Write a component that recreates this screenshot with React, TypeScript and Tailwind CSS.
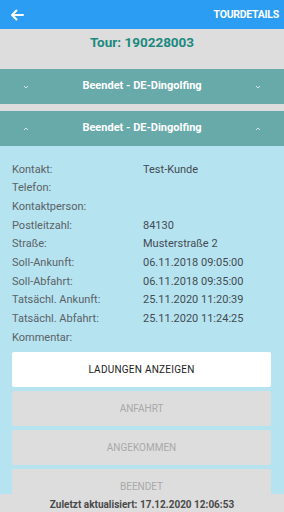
import React from 'react';

const rows: [string, string][] = [
  ['Kontakt:', 'Test-Kunde'],
  ['Telefon:', ''],
  ['Kontaktperson:', ''],
  ['Postleitzahl:', '84130'],
  ['Straße:', 'Musterstraße 2'],
  ['Soll-Ankunft:', '06.11.2018 09:05:00'],
  ['Soll-Abfahrt:', '06.11.2018 09:35:00'],
  ['Tatsächl. Ankunft:', '25.11.2020 11:20:39'],
  ['Tatsächl. Abfahrt:', '25.11.2020 11:24:25'],
  ['Kommentar:', ''],
];

const Chevron = ({ up }: { up?: boolean }) => (
  <svg width="6" height="4" viewBox="0 0 6 4" className="opacity-70">
    <path d={up ? 'M1 3 L3 1 L5 3' : 'M1 1 L3 3 L5 1'} stroke="white" strokeWidth="1" fill="none" />
  </svg>
);

const StopHeader = ({ title, open }: { title: string; open?: boolean }) => (
  <div className="h-[35px] shrink-0 bg-[#68a9a9] flex items-center justify-between px-[23px]">
    <Chevron up={open} />
    <span className="text-white font-bold text-[11px]">{title}</span>
    <Chevron up={open} />
  </div>
);

export default function App() {
  return (
    <div className="h-[512px] w-[284px] flex flex-col bg-[#dddddd] overflow-hidden" style={{ fontFamily: 'Roboto, sans-serif' }}>
      <div className="h-[29px] shrink-0 bg-[#2b9ef3] flex items-center justify-between pl-[10px] pr-[5px]">
        <svg width="14" height="12" viewBox="0 0 14 12">
          <path d="M13 6 H2 M6.5 1.5 L2 6 L6.5 10.5" stroke="white" strokeWidth="2" fill="none" strokeLinecap="round" strokeLinejoin="round" />
        </svg>
        <span className="text-white font-bold text-[10.5px] tracking-tight">TOURDETAILS</span>
      </div>

      <div className="flex-1 min-h-0 overflow-hidden flex flex-col">
        <div className="h-[40px] shrink-0 flex items-start justify-center pt-[3px]">
          <span className="text-[#1b8a80] font-bold text-[13.5px]">Tour: 190228003</span>
        </div>

        <StopHeader title="Beendet - DE-Dingolfing" />
        <div className="h-[7px] shrink-0" />
        <StopHeader title="Beendet - DE-Dingolfing" open />

        <div className="flex-1 shrink-0 bg-[#b6e3f0] pt-[14.5px] pl-3 pr-[13px]">
          {rows.map(([label, value]) => (
            <div key={label} className="h-[18.7px] flex items-center text-[11px] text-[#5a6266]">
              <span className="w-[131px]">{label}</span>
              <span className="text-[#434c52]">{value}</span>
            </div>
          ))}

          <div className="flex flex-col gap-[4px] mt-[4.5px]">
            <div className="h-[35px] bg-white rounded-[2px] flex items-center justify-center text-[10px] text-[#222] tracking-wide">
              LADUNGEN ANZEIGEN
            </div>
            <div className="h-[35px] bg-[#dddddd] rounded-[2px] flex items-center justify-center text-[10px] text-[#a9a9a9]">
              ANFAHRT
            </div>
            <div className="h-[35px] bg-[#dddddd] rounded-[2px] flex items-center justify-center text-[10px] text-[#a9a9a9]">
              ANGEKOMMEN
            </div>
            <div className="h-[35px] bg-[#dddddd] rounded-[2px] flex items-center justify-center text-[10px] text-[#a9a9a9]">
              BEENDET
            </div>
          </div>
        </div>
      </div>

      <div className="h-[18px] shrink-0 bg-[#dddddd] flex items-center justify-center pt-[2px]">
        <span className="text-[10px] font-bold text-[#4a4a4a]">Zuletzt aktualisiert: 17.12.2020 12:06:53</span>
      </div>
    </div>
  );
}
